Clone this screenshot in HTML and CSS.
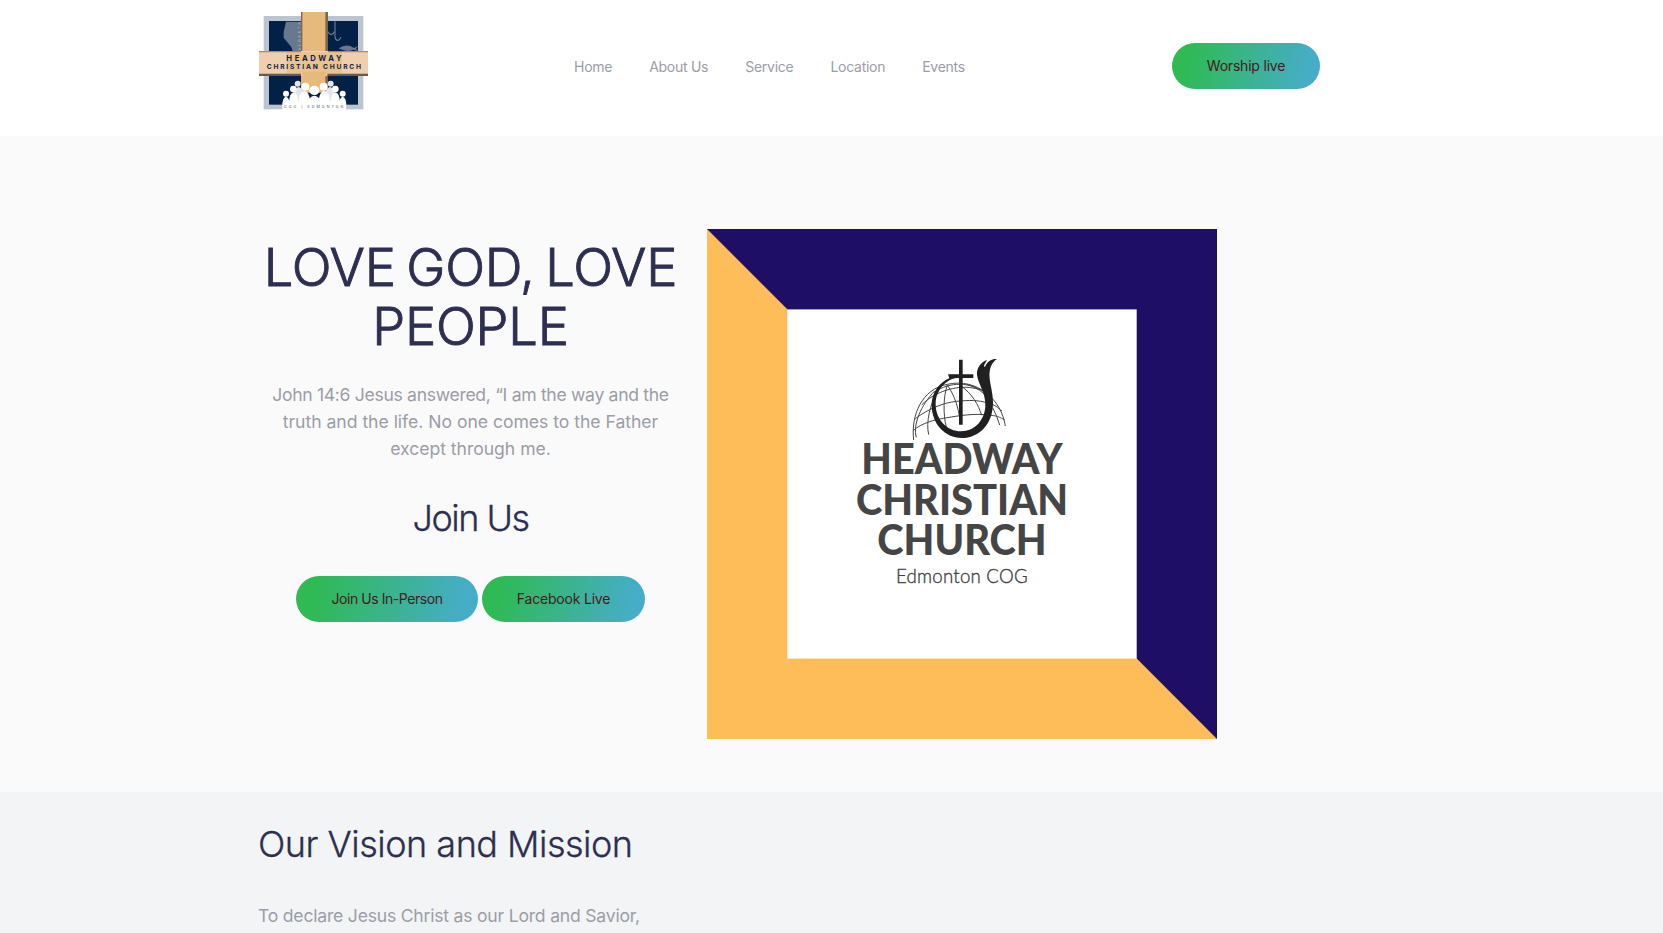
FILE: index.html
```html
<!DOCTYPE html>
<html lang="en">
<head>
<meta charset="utf-8">
<title>Headway Christian Church</title>
<link rel="stylesheet" href="styles.css">
</head>
<body>
<header class="header">
  <a class="brand" href="#">
    <svg class="logo" viewBox="27 36 327 306" aria-label="Headway Christian Church">
      <rect x="41" y="48" width="299" height="280" fill="#bcc5cf"/>
      <rect x="57" y="63" width="267" height="251" fill="#032147"/>
      <path d="M108 65H154V153H128L124 141L101 113V96Z" fill="#68798e"/>
      <text x="0" y="0" transform="translate(153 151) rotate(-90)" font-size="11" textLength="84" fill="#a9b4c0">ALBERTA</text>
      <path d="M255 64V110Q256 121 264 121Q270 121 272 111M234 95Q237 104 245 103Q251 102 252 95" fill="none" stroke="#68798e" stroke-width="3.5"/>
      <path d="M266 145Q289 129 312 144L324 138L318 146L324 154L311 149Q289 159 266 145Z" fill="#68798e"/>
      <path d="M153 36H234V278H153Z" fill="#e6b97d"/>
      <path d="M153 36H157V153H153ZM226 36H234V153H226ZM226 226H234V278H226Z" fill="#806548"/>
      <rect x="27" y="153" width="327" height="75" fill="#efcfae"/>
      <rect x="110" y="157" width="166" height="64" fill="#eac18f"/>
      <rect x="157" y="215" width="70" height="15" fill="#e6b97d"/>
      <path d="M27 153H153V157H27ZM234 153H354V157H234Z" fill="#a98b6c"/>
      <path d="M27 221H153V228H27ZM232 221H354V228H232Z" fill="#6b5a4c"/>
      <text class="logo-name" x="109" y="184" font-size="23" textLength="166">HEADWAY</text>
      <text class="logo-name" x="50" y="208" font-size="20" textLength="283">CHRISTIAN CHURCH</text>
      <g fill="#e2e5eb">
        <circle cx="143" cy="251" r="9"/><circle cx="242" cy="251" r="9"/>
        <ellipse cx="146" cy="288" rx="15" ry="27"/><ellipse cx="240" cy="288" rx="15" ry="27"/>
      </g>
      <g fill="#fff">
        <path d="M98 308L120 304H266L288 308V342H98Z"/>
        <ellipse cx="108" cy="316" rx="11" ry="26"/><ellipse cx="278" cy="316" rx="11" ry="26"/>
        <ellipse cx="131" cy="307" rx="14" ry="30"/><ellipse cx="256" cy="307" rx="14" ry="30"/>
        <ellipse cx="163" cy="305" rx="17" ry="32"/><ellipse cx="223" cy="305" rx="17" ry="32"/>
        <ellipse cx="193" cy="313" rx="20" ry="26"/>
        <circle cx="108" cy="281" r="9"/><circle cx="278" cy="281" r="9"/>
        <circle cx="130" cy="267" r="10"/><circle cx="256" cy="267" r="10"/>
        <circle cx="166" cy="260" r="12"/><circle cx="221" cy="260" r="12"/>
        <ellipse cx="193" cy="271" rx="15" ry="14"/>
      </g>
      <text x="102" y="324" font-size="11" textLength="178" fill="#44566e">COG | EDMONTON</text>
    </svg>
  </a>
  <nav class="nav">
    <a href="#">Home</a><a href="#">About Us</a><a href="#">Service</a><a href="#">Location</a><a href="#">Events</a>
  </nav>
  <a class="btn btn-worship" href="#">Worship live</a>
</header>
<main>
  <section class="hero">
    <div class="hero-copy">
      <h1>LOVE GOD, LOVE<br>PEOPLE</h1>
      <p class="verse"><span class="verse-lead">John 14:6 Jesus answered, “I am the way and the</span><br>truth and the life. No one comes to the Father<br>except through me.</p>
      <h2>Join Us</h2>
      <div class="actions"><a class="btn btn-person" href="#">Join Us In-Person</a><a class="btn btn-facebook" href="#">Facebook Live</a></div>
    </div>
    <svg class="hero-art" viewBox="0 0 510 510" aria-label="Headway Christian Church, Edmonton COG">
      <rect width="510" height="510" fill="#ffbd59"/>
      <path d="M0 0H510V510L429.7 429.5L80.3 80.2Z" fill="#1f0e66"/>
      <rect x="80.3" y="80.4" width="349.4" height="349.2" fill="#fff"/>
      <g transform="translate(133 111) scale(.33333)">
        <g class="globe">
          <path d="M221 300C212 225 246 147 322 133C411 113 484 178 496 258"/>
          <path d="M229 292C218 255 242 196 284 153M266 284C257 246 271 190 292 157M319 262C309 224 310 168 322 135M322 135C344 167 354 199 360 240M362 137C398 163 415 194 425 226M380 133C420 145 444 169 455 190M458 203Q471 228 479 255"/>
          <path d="M219 272C245 249 285 239 310 235S388 220 435 224S475 232 494 239M226 236C264 207 310 188 350 184S412 180 444 189S474 207 486 213M245 195C285 153 350 137 392 143S430 154 439 161M283 157C330 123 391 127 433 156"/>
        </g>
        <path d="M324 103H357V59H368V103H400V114H368V254H357V114H348C318 119 288 150 287 191C286 238 322 274 363 274C407 274 434 238 436 199C438 158 414 132 411 104C409 83 425 65 441 60L433 74Q430 82 435 80C444 61 456 56 471 57C453 69 447 88 449 115C450 134 459 158 459 188C459 253 417 294 365 294C315 294 275 251 275 195C275 157 298 128 328 115Z" fill="#202020"/>
        <g class="art-name">
          <text x="64" y="402" textLength="604" lengthAdjust="spacingAndGlyphs">HEADWAY</text>
          <text x="48" y="524" textLength="636" lengthAdjust="spacingAndGlyphs">CHRISTIAN</text>
          <text x="112" y="646" textLength="508" lengthAdjust="spacingAndGlyphs">CHURCH</text>
        </g>
        <text class="art-city" x="168" y="729" textLength="395">Edmonton COG</text>
      </g>
    </svg>
  </section>
  <section class="vision">
    <h2>Our Vision and Mission</h2>
    <p>To declare Jesus Christ as our Lord and Savior,</p>
  </section>
</main>
</body>
</html>
```
FILE: styles.css
```css
* { box-sizing: border-box; }
html, body { height: 100%; }
body {
  margin: 0;
  overflow: hidden;
  background: #fff;
  font-family: Inter, "Liberation Sans", sans-serif;
  color: #9b9da7;
}
a { color: inherit; text-decoration: none; }
h1, h2, p { margin: 0; white-space: nowrap; }
h1, h2 { color: #2d2f50; font-weight: 300; }
h2 { font-size: 36px; line-height: 44px; -webkit-text-stroke: .3px #2d2f50; }
p { font-size: 17.6px; font-weight: 400; line-height: 27px; }

.header {
  height: 136px;
  display: grid;
  grid-template-columns: 315px 598px 148px;
  padding-left: 259px;
}
.logo { display: block; width: 109px; height: 102px; margin-top: 12px; font-family: Inter, sans-serif; }
.logo-name { fill: #092448; font-weight: 700; }

.nav { display: flex; gap: 37px; padding-top: 57px; font-size: 14px; line-height: 20px; letter-spacing: -.27px; white-space: nowrap; }

.btn {
  display: block;
  height: 46px;
  border-radius: 23px;
  background: linear-gradient(100deg, #2fba53 10%, #46adc8 92%);
  color: #46191c;
  font-size: 14px;
  line-height: 46px;
  letter-spacing: -.2px;
  text-align: center;
  white-space: nowrap;
}
.btn-worship { margin-top: 43px; }

.hero {
  height: 656px;
  padding: 93px 0 0 259px;
  background: #fafafa;
  display: flex;
  gap: 25px;
}
.hero-copy { width: 423px; padding-top: 9px; text-align: center; }
h1 { font-size: 52.5px; line-height: 59px; letter-spacing: -.2px; word-spacing: -4px; -webkit-text-stroke: .9px #2d2f50; }
.verse { margin-top: 25px; letter-spacing: -.03px; }
.verse-lead { letter-spacing: -.32px; }
.hero-copy h2 { margin-top: 34px; letter-spacing: -1.5px; }
.actions { display: flex; justify-content: center; gap: 4px; margin-top: 36px; }
.btn-person { width: 182px; letter-spacing: -.44px; }
.btn-facebook { width: 163px; }

.hero-art { width: 510px; height: 510px; flex: none; }
.globe { fill: none; stroke: #444; stroke-width: 3; }
.art-name { font-family: Lato, sans-serif; font-size: 128px; font-weight: 900; fill: #454545; }
.art-city { font-family: Lato, sans-serif; font-size: 56px; font-weight: 300; fill: #404040; stroke: #404040; stroke-width: 1; }

.vision { height: 141px; padding: 30px 0 0 258px; background: #f2f4f6; }
.vision h2 { letter-spacing: -.5px; }
.vision p { margin-top: 36px; letter-spacing: -.22px; }
```
